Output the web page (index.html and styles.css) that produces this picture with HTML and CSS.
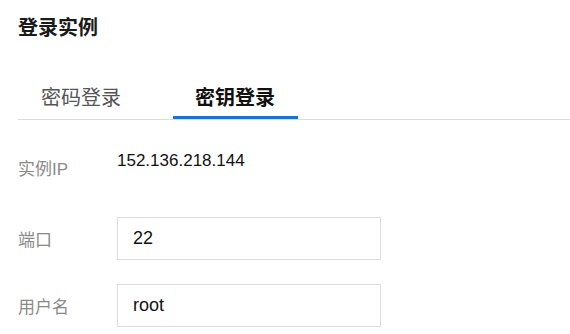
FILE: index.html
```html
<!DOCTYPE html>
<html lang="zh">
<head>
<meta charset="utf-8">
<link rel="stylesheet" href="styles.css">
</head>
<body>
<div class="page">
  <h1 class="title">登录实例</h1>
  <div class="tabs">
    <div class="tab">密码登录</div>
    <div class="tab active">密钥登录</div>
  </div>
  <div class="form">
    <div class="row row-ip">
      <div class="label">实例IP</div>
      <div class="value">152.136.218.144</div>
    </div>
    <div class="row row-port">
      <div class="label">端口</div>
      <div class="input">22</div>
    </div>
    <div class="row row-user">
      <div class="label">用户名</div>
      <div class="input">root</div>
    </div>
  </div>
</div>
</body>
</html>
```
FILE: styles.css
```css
html, body {
  margin: 0;
  padding: 0;
  background: #fff;
}
body {
  font-family: "Liberation Sans", "Noto Sans CJK SC", sans-serif;
  width: 570px;
  height: 334px;
  overflow: hidden;
}
.page {
  padding-left: 18px;
}
.title {
  margin: 18px 0 0;
  font-size: 20px;
  line-height: 20px;
  font-weight: 700;
  color: #1a1a1a;
}
.tabs {
  display: flex;
  gap: 30px;
  margin-top: 50px;
  border-bottom: 1px solid #dcdcdc;
}
.tab {
  padding: 0 22px 8px 23px;
  font-size: 20px;
  line-height: 20px;
  color: #555;
  border-bottom: 3px solid transparent;
}
.tab.active {
  padding: 0 23px 8px 22px;
  color: #111;
  font-weight: 700;
  border-bottom-color: #1f6fd6;
}
.form {
  padding-top: 26px;
}
.row {
  display: flex;
  align-items: center;
  height: 43px;
}
.row-port {
  margin-top: 28px;
}
.row-user {
  margin-top: 24px;
}
.label {
  width: 99px;
  font-size: 17px;
  color: #8a8a8a;
}
.value {
  align-self: flex-start;
  margin-top: 5px;
  font-size: 17px;
  line-height: 20px;
  color: #111;
}
.input {
  box-sizing: border-box;
  width: 264px;
  height: 43px;
  padding-left: 15px;
  border: 1px solid #dcdcdc;
  display: flex;
  align-items: center;
  font-size: 18px;
  color: #111;
}
```
